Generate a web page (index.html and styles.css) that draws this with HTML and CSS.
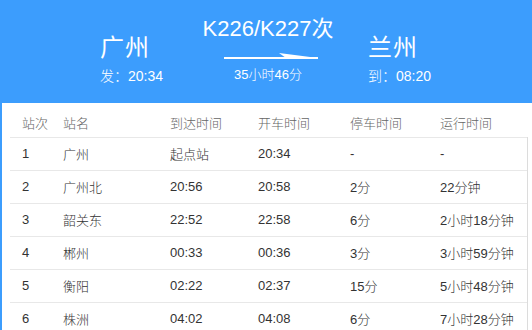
FILE: index.html
```html
<!DOCTYPE html>
<html lang="zh">
<head>
<meta charset="utf-8">
<link rel="stylesheet" href="styles.css">
</head>
<body>
<div class="page">
  <header class="banner">
    <div class="end from">
      <div class="city">广州</div>
      <div class="time">发：20:34</div>
    </div>
    <div class="mid">
      <div class="train">K226/K227次</div>
      <svg class="arrow" width="94" height="8" viewBox="0 0 94 8">
        <rect x="0" y="5" width="94" height="2" fill="#fff"/>
        <polygon points="55,1 94,6 62,6" fill="#fff"/>
      </svg>
      <div class="dur">35小时46分</div>
    </div>
    <div class="end to">
      <div class="city">兰州</div>
      <div class="time">到：08:20</div>
    </div>
  </header>
  <table class="stops">
    <thead>
      <tr><th class="c1">站次</th><th class="c2">站名</th><th class="c3">到达时间</th><th class="c4">开车时间</th><th class="c5">停车时间</th><th class="c6">运行时间</th></tr>
    </thead>
    <tbody>
      <tr><td>1</td><td>广州</td><td>起点站</td><td>20:34</td><td>-</td><td>-</td></tr>
      <tr><td>2</td><td>广州北</td><td>20:56</td><td>20:58</td><td>2分</td><td>22分钟</td></tr>
      <tr><td>3</td><td>韶关东</td><td>22:52</td><td>22:58</td><td>6分</td><td>2小时18分钟</td></tr>
      <tr><td>4</td><td>郴州</td><td>00:33</td><td>00:36</td><td>3分</td><td>3小时59分钟</td></tr>
      <tr><td>5</td><td>衡阳</td><td>02:22</td><td>02:37</td><td>15分</td><td>5小时48分钟</td></tr>
      <tr><td>6</td><td>株洲</td><td>04:02</td><td>04:08</td><td>6分</td><td>7小时28分钟</td></tr>
    </tbody>
  </table>
</div>
</body>
</html>
```

FILE: styles.css
```css
html, body {
  margin: 0;
  padding: 0;
  background: #fff;
}
body {
  font-family: "Liberation Sans", "Noto Sans CJK SC", sans-serif;
  font-weight: 300;
  width: 532px;
  height: 330px;
  overflow: hidden;
}
.page {
  border-left: 2px solid #3c9dfd;
  min-height: 330px;
  box-sizing: border-box;
}
.banner {
  background: #3c9dfd;
  height: 103px;
  margin-left: -2px;
  display: flex;
  padding-left: 100px;
  box-sizing: border-box;
  color: #fff;
}
.end {
  width: 88px;
  padding-top: 33px;
}
.to {
  margin-left: 20px;
}
.city {
  font-size: 24px;
  line-height: 30px;
  letter-spacing: 1px;
  font-weight: 400;
}
.time {
  font-size: 14px;
  line-height: 20px;
  margin-top: 3px;
}
.mid {
  width: 160px;
  display: flex;
  flex-direction: column;
  align-items: center;
  padding-top: 16px;
}
.train {
  font-size: 22px;
  line-height: 26px;
  font-weight: 400;
}
.arrow {
  display: block;
  margin-top: 10px;
  margin-left: 6px;
}
.dur {
  font-size: 13px;
  line-height: 18px;
  margin-top: 6px;
}
.stops {
  margin-left: 8px;
  width: 517px;
  border-collapse: collapse;
  table-layout: fixed;
  font-size: 13px;
}
.stops th, .stops td {
  text-align: left;
  font-weight: 300;
  padding: 0 0 0 12px;
  white-space: nowrap;
}
.stops th {
  color: #666;
  height: 34px;
  padding-top: 6px;
  box-sizing: border-box;
}
.stops td {
  color: #333;
  height: 33px;
  border-top: 1px solid #e8e8e8;
  box-sizing: border-box;
}
.stops td:last-child {
  border-right: 1px solid #dcdcdc;
}
.c1 { width: 41px; }
.c2 { width: 107px; }
.c3 { width: 88px; }
.c4 { width: 92px; }
.c5 { width: 90px; }
.c6 { width: 99px; }
```
